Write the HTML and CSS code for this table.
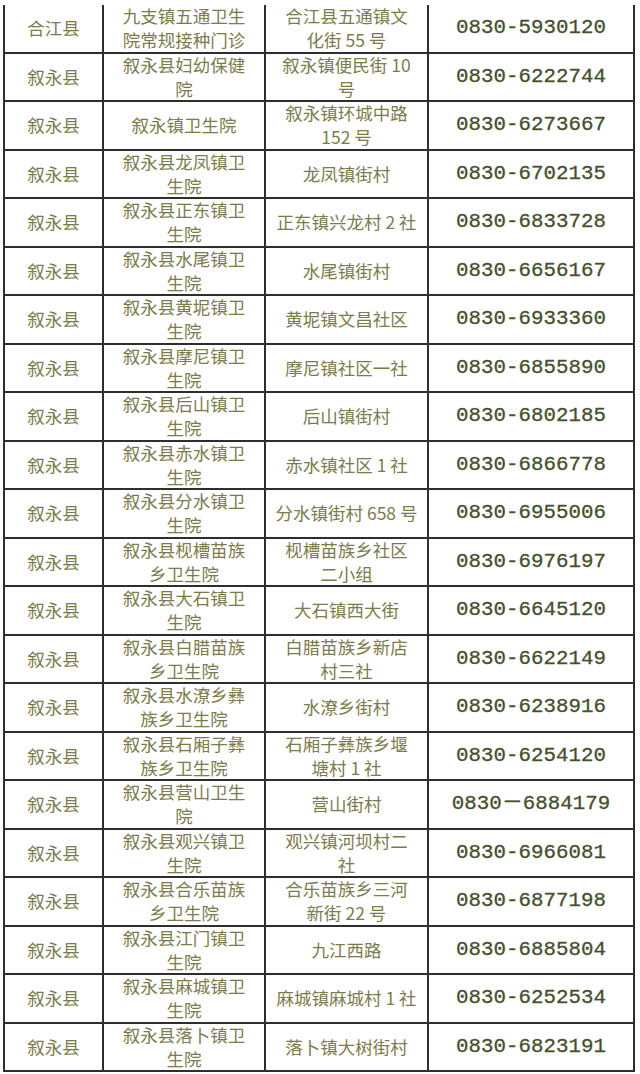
FILE: index.html
```html
<!DOCTYPE html>
<html lang="zh-CN">
<head>
<meta charset="utf-8">
<title>接种门诊</title>
<link rel="stylesheet" href="styles.css">
</head>
<body>
<div class="sheet">
  <div class="c county">合江县</div><div class="c name">九支镇五通卫生<br>院常规接种门诊</div><div class="c addr">合江县五通镇文<br>化街 55 号</div><div class="c tel">0830-5930120</div>
  <div class="c county">叙永县</div><div class="c name">叙永县妇幼保健<br>院</div><div class="c addr">叙永镇便民街 10<br>号</div><div class="c tel">0830-6222744</div>
  <div class="c county">叙永县</div><div class="c name">叙永镇卫生院</div><div class="c addr">叙永镇环城中路<br>152 号</div><div class="c tel">0830-6273667</div>
  <div class="c county">叙永县</div><div class="c name">叙永县龙凤镇卫<br>生院</div><div class="c addr">龙凤镇街村</div><div class="c tel">0830-6702135</div>
  <div class="c county">叙永县</div><div class="c name">叙永县正东镇卫<br>生院</div><div class="c addr">正东镇兴龙村 2 社</div><div class="c tel">0830-6833728</div>
  <div class="c county">叙永县</div><div class="c name">叙永县水尾镇卫<br>生院</div><div class="c addr">水尾镇街村</div><div class="c tel">0830-6656167</div>
  <div class="c county">叙永县</div><div class="c name">叙永县黄坭镇卫<br>生院</div><div class="c addr">黄坭镇文昌社区</div><div class="c tel">0830-6933360</div>
  <div class="c county">叙永县</div><div class="c name">叙永县摩尼镇卫<br>生院</div><div class="c addr">摩尼镇社区一社</div><div class="c tel">0830-6855890</div>
  <div class="c county">叙永县</div><div class="c name">叙永县后山镇卫<br>生院</div><div class="c addr">后山镇街村</div><div class="c tel">0830-6802185</div>
  <div class="c county">叙永县</div><div class="c name">叙永县赤水镇卫<br>生院</div><div class="c addr">赤水镇社区 1 社</div><div class="c tel">0830-6866778</div>
  <div class="c county">叙永县</div><div class="c name">叙永县分水镇卫<br>生院</div><div class="c addr">分水镇街村 658 号</div><div class="c tel">0830-6955006</div>
  <div class="c county">叙永县</div><div class="c name">叙永县枧槽苗族<br>乡卫生院</div><div class="c addr">枧槽苗族乡社区<br>二小组</div><div class="c tel">0830-6976197</div>
  <div class="c county">叙永县</div><div class="c name">叙永县大石镇卫<br>生院</div><div class="c addr">大石镇西大街</div><div class="c tel">0830-6645120</div>
  <div class="c county">叙永县</div><div class="c name">叙永县白腊苗族<br>乡卫生院</div><div class="c addr">白腊苗族乡新店<br>村三社</div><div class="c tel">0830-6622149</div>
  <div class="c county">叙永县</div><div class="c name">叙永县水潦乡彝<br>族乡卫生院</div><div class="c addr">水潦乡街村</div><div class="c tel">0830-6238916</div>
  <div class="c county">叙永县</div><div class="c name">叙永县石厢子彝<br>族乡卫生院</div><div class="c addr">石厢子彝族乡堰<br>塘村 1 社</div><div class="c tel">0830-6254120</div>
  <div class="c county">叙永县</div><div class="c name">叙永县营山卫生<br>院</div><div class="c addr">营山街村</div><div class="c tel">0830－6884179</div>
  <div class="c county">叙永县</div><div class="c name">叙永县观兴镇卫<br>生院</div><div class="c addr">观兴镇河坝村二<br>社</div><div class="c tel">0830-6966081</div>
  <div class="c county">叙永县</div><div class="c name">叙永县合乐苗族<br>乡卫生院</div><div class="c addr">合乐苗族乡三河<br>新街 22 号</div><div class="c tel">0830-6877198</div>
  <div class="c county">叙永县</div><div class="c name">叙永县江门镇卫<br>生院</div><div class="c addr">九江西路</div><div class="c tel">0830-6885804</div>
  <div class="c county">叙永县</div><div class="c name">叙永县麻城镇卫<br>生院</div><div class="c addr">麻城镇麻城村 1 社</div><div class="c tel">0830-6252534</div>
  <div class="c county">叙永县</div><div class="c name">叙永县落卜镇卫<br>生院</div><div class="c addr">落卜镇大树街村</div><div class="c tel">0830-6823191</div>
</div>
</body>
</html>
```

FILE: styles.css
```css
html, body {
  margin: 0;
  padding: 0;
  background: #ffffff;
}

body {
  font-family: "Noto Sans CJK SC", "Noto Sans", sans-serif;
}

.sheet {
  margin: 5px 0 0 3px;
  width: 632px;
  box-sizing: border-box;
  display: grid;
  grid-template-columns: 97px 160px 161px 204px;
  grid-auto-rows: 46.5px;
  gap: 2px;
  padding: 0 2px 2px 2px;
  background: #2e2e2e;
}

.c {
  background: #ffffff;
  display: flex;
  align-items: center;
  justify-content: center;
  text-align: center;
  white-space: nowrap;
  font-size: 17.5px;
  line-height: 24px;
  color: #7c7c4a;
}

.tel {
  font-family: "Liberation Mono", "DejaVu Sans Mono", monospace;
  font-size: 20.8px;
  color: #44512a;
  -webkit-text-stroke: 0.3px #44512a;
}
```
